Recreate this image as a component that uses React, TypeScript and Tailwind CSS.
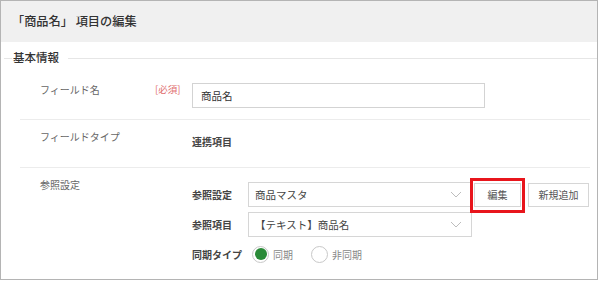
function Chevron() {
  return (
    <svg width="12" height="7" viewBox="0 0 12 7" fill="none" className="text-[#bdbdbd]">
      <path d="M1 1L6 6L11 1" stroke="currentColor" strokeWidth="1" />
    </svg>
  );
}

function Select({ value }: { value: string }) {
  return (
    <div className="flex h-[25px] w-[224px] items-center justify-between border border-[#d6d6d6] bg-white pl-[6px] pr-[9px] text-[10.5px] text-[#444]">
      <span>{value}</span>
      <Chevron />
    </div>
  );
}

export default function App() {
  return (
    <div className="h-[281px] w-[600px] bg-white font-['Noto_Sans_CJK_JP',sans-serif]">
      <div className="flex h-[280px] w-[598px] flex-col border border-[#b4b4b4]">
        {/* Header */}
        <div className="flex h-[41px] items-center bg-[#f0f0f0] pl-[11px] text-[12.2px] font-medium text-[#333]">
          「商品名」 項目の編集
        </div>

        {/* Section legend */}
        <div className="flex h-[32px] items-center">
          <div className="ml-[3px] h-px w-[8px] bg-[#e6e6e6]" />
          <span className="px-[1px] text-[11.5px] font-medium text-[#333]">基本情報</span>
          <div className="ml-[8px] h-px flex-1 bg-[#e6e6e6]" />
        </div>

        <div className="ml-[19px] mr-[7px] flex flex-col">
          {/* Field name */}
          <div className="flex h-[46px] border-b border-[#ececec]">
            <div className="mt-[8px] w-[135px] pl-[20px] text-[10px] leading-[16px] text-[#666]">フィールド名</div>
            <div className="mt-[7px] w-[37px] text-[9.5px] leading-[16px] text-[#e06a6a]">[必須]</div>
            <div className="mt-[9px] flex h-[25px] w-[293px] items-center border border-[#d3d3d3] pl-[8px] text-[10.5px] text-[#333]">
              商品名
            </div>
          </div>

          {/* Field type */}
          <div className="flex h-[48px] border-b border-[#ececec]">
            <div className="mt-[9px] w-[172px] pl-[20px] text-[10px] leading-[16px] text-[#666]">フィールドタイプ</div>
            <div className="mt-[14px] text-[10px] font-bold leading-[16px] text-[#444]">連携項目</div>
          </div>

          {/* Reference settings */}
          <div className="flex">
            <div className="mt-[9px] w-[172px] pl-[20px] text-[10px] leading-[16px] text-[#666]">参照設定</div>
            <div className="mt-[14px] flex flex-col">
              <div className="flex items-center">
                <div className="w-[56px] text-[10px] font-bold text-[#444]">参照設定</div>
                <Select value="商品マスタ" />
                <div className="relative ml-[2px]">
                  <div className="flex h-[24px] w-[47px] items-center justify-center border border-[#d6d6d6] bg-white text-[10px] text-[#555]">
                    編集
                  </div>
                  <div className="pointer-events-none absolute -bottom-[6px] -left-[4px] -right-[4px] -top-[5px] border-[3px] border-[#e8151c]" />
                </div>
                <div className="ml-[7px] flex h-[24px] w-[61px] items-center justify-center border border-[#d6d6d6] bg-white text-[10px] text-[#555]">
                  新規追加
                </div>
              </div>

              <div className="mt-[5px] flex items-center">
                <div className="w-[56px] text-[10px] font-bold text-[#444]">参照項目</div>
                <Select value="【テキスト】商品名" />
              </div>

              <div className="mt-[7px] flex h-[20px] items-center">
                <div className="w-[56px] text-[10px] font-bold text-[#444]">同期タイプ</div>
                <div className="ml-[4px] flex items-center gap-[4px]">
                  <div className="flex h-[17px] w-[17px] items-center justify-center rounded-full border border-[#c8c8c8] bg-white">
                    <div className="h-[12px] w-[12px] rounded-full bg-[#2a8a38]" />
                  </div>
                  <span className="text-[10px] text-[#888]">同期</span>
                </div>
                <div className="ml-[18px] flex items-center gap-[4px]">
                  <div className="h-[17px] w-[17px] rounded-full border border-[#c8c8c8] bg-white" />
                  <span className="text-[10px] text-[#888]">非同期</span>
                </div>
              </div>
            </div>
          </div>
        </div>
      </div>
    </div>
  );
}
